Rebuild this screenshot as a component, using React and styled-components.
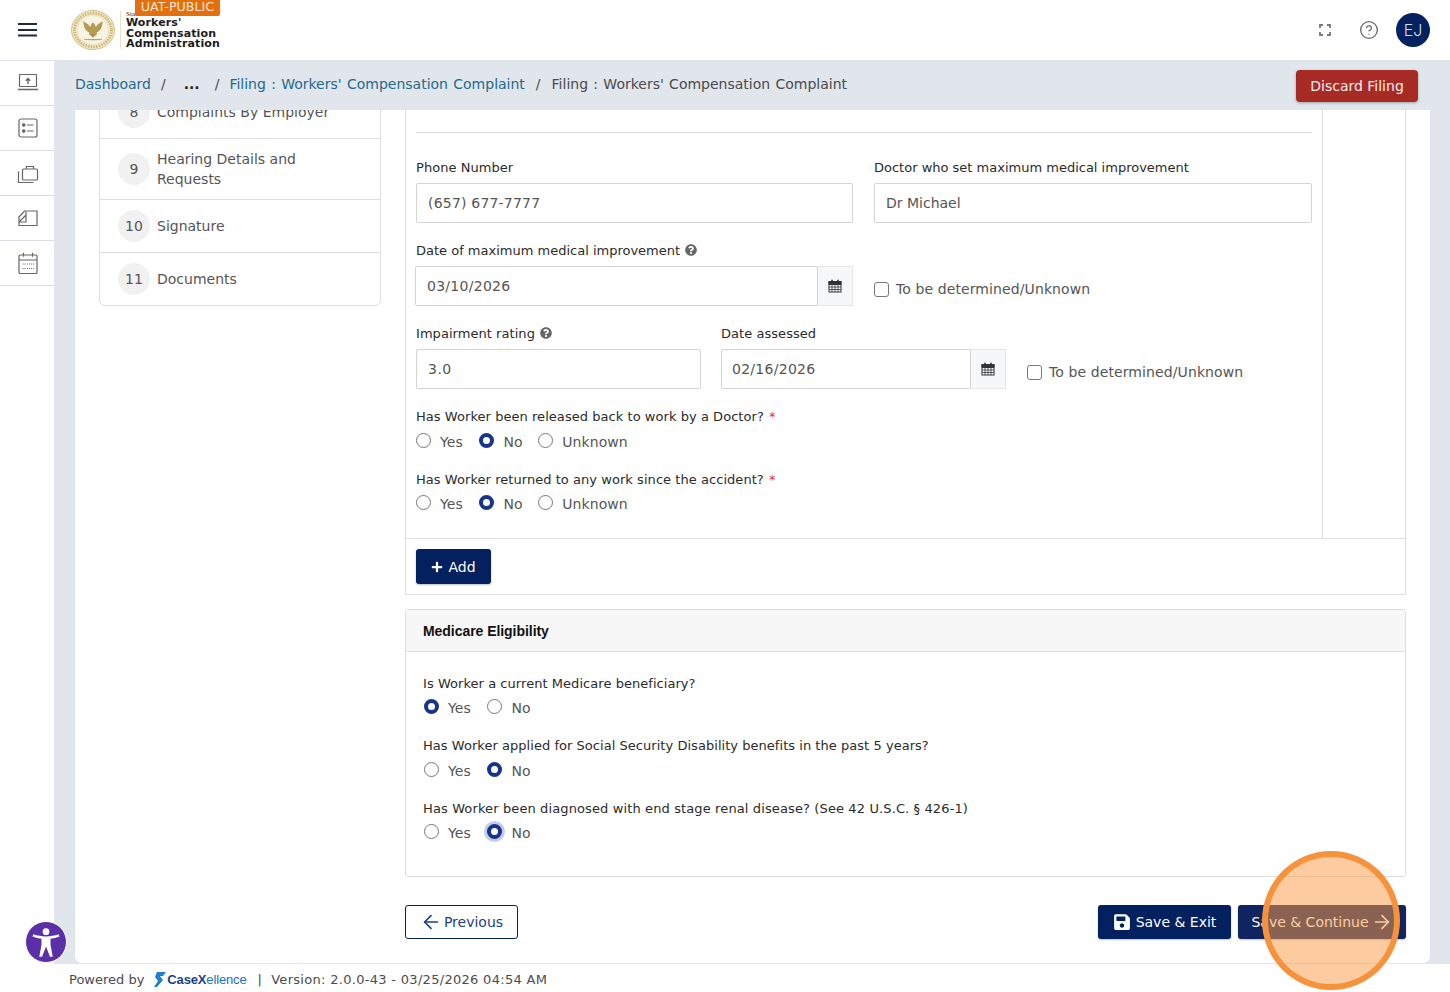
import styled, { createGlobalStyle } from "styled-components";
import { CircleHelp, ArrowLeft, ArrowRight } from "lucide-react";
import { FaPlus, FaSave, FaQuestionCircle } from "react-icons/fa";

const GlobalStyle = createGlobalStyle`
  html, body {
    margin: 0;
    padding: 0;
    background: #fff;
    font-family: "DejaVu Sans", Verdana, sans-serif;
    overflow: hidden;
  }
  * { box-sizing: border-box; }
`;

const Page = styled.div`
  position: relative;
  width: 1450px;
  height: 992px;
  display: flex;
  flex-direction: column;
  overflow: hidden;
`;

const Header = styled.header`
  height: 60px;
  flex: none;
  display: flex;
  align-items: center;
  padding: 0 20px 0 18px;
  background: #fff;
`;

const Burger = styled.div`
  display: flex;
  width: 20px;
  margin-right: 32px;
`;

const Logo = styled.div`
  position: relative;
  display: flex;
  align-items: center;
  height: 60px;
`;

const LogoText = styled.div`
  margin-left: 4px;
  padding-left: 5px;
  padding-top: 7px;
  border-left: 1px solid #e9e2c6;
  height: 38px;
  color: #1c1c1c;
  font-weight: 700;
  font-size: 11px;
  line-height: 10.500px;
  letter-spacing: 0.12px;
  small {
    display: block;
    font-family: "Liberation Serif", serif;
    font-size: 7px;
    font-weight: 400;
    line-height: 5px;
    margin-top: -6px;
    margin-bottom: 1px;
  }
`;

const EnvBadge = styled.div`
  position: absolute;
  top: 0;
  left: 65px;
  width: 85px;
  height: 16px;
  background: #e46f0d;
  color: #fbe4d2;
  border-radius: 0 0 2px 2px;
  font-size: 12.700px;
  line-height: 13px;
  text-align: center;
`;

const HeaderRight = styled.div`
  margin-left: auto;
  display: flex;
  align-items: center;
  color: #6a6a6a;
`;

const HeaderIcon = styled.div`
  display: flex;
  margin-right: ${(p) => p.$gap}px;
`;

const Avatar = styled.div`
  width: 34px;
  height: 34px;
  border-radius: 50%;
  background: #04225f;
  color: #d5deeb;
  font: 300 16px Inter, sans-serif;
  display: flex;
  align-items: center;
  justify-content: center;
`;

const Body = styled.div`
  flex: 1;
  display: flex;
  min-height: 0;
`;

const Sidebar = styled.nav`
  width: 54px;
  flex: none;
  background: #fff;
  border-top: 1px solid #dfe3e8;
`;

const SideItem = styled.div`
  height: 45px;
  display: flex;
  align-items: center;
  justify-content: center;
  padding-left: 2px;
  border-bottom: 1px solid #d9dce0;
  color: #666;
`;

const Main = styled.main`
  flex: 1;
  min-width: 0;
  display: flex;
  flex-direction: column;
  background: #e1e6ed;
`;

const Crumbs = styled.div`
  height: 50px;
  flex: none;
  display: flex;
  align-items: center;
  padding: 0 32px 2px 21px;
  font-size: 14px;
  color: #4a4a4a;
`;

const CrumbLink = styled.a`
  color: #1f6a8c;
`;

const CrumbTitle = styled.span`
  word-spacing: 0.85px;
`;

const CrumbSep = styled.span`
  margin: 0 ${(p) => p.$right}px 0 ${(p) => p.$left}px;
`;

const CrumbMore = styled.b`
  color: #222;
  font-size: 14px;
`;

const DiscardButton = styled.button`
  margin-left: auto;
  margin-top: 4px;
  width: 122px;
  height: 32px;
  border: 0;
  border-radius: 4px;
  background: #a72a25;
  color: #fbeeee;
  font: 14px "DejaVu Sans", sans-serif;
  box-shadow: 0 1px 3px rgba(0, 0, 0, 0.3);
`;

const Card = styled.div`
  flex: 1;
  min-height: 0;
  margin: 0 20px 0 21px;
  padding: 0 24px;
  background: #fff;
  border-radius: 0 0 6px 6px;
  overflow: hidden;
  box-shadow: 0 1px 1px rgba(0, 0, 0, 0.08);
`;

const Columns = styled.div`
  display: flex;
  align-items: flex-start;
  gap: 24px;
  margin-top: -25px;
`;

const Stepper = styled.ul`
  width: 282px;
  flex: none;
  list-style: none;
  margin: 0;
  padding: 0;
  border: 1px solid #dedede;
  border-radius: 6px;
`;

const Step = styled.li`
  height: ${(p) => p.$h}px;
  display: flex;
  align-items: center;
  gap: 7px;
  padding: 0 18px;
  border-bottom: ${(p) => (p.$last ? "0" : "1px solid #dedede")};
  color: #555;
  font-size: 14px;
  line-height: 20px;
`;

const StepNumber = styled.span`
  width: 32px;
  height: 32px;
  flex: none;
  border-radius: 50%;
  background: #f1f1f1;
  display: flex;
  align-items: center;
  justify-content: center;
`;

const FormColumn = styled.div`
  width: 1001px;
  flex: none;
`;

const Panel = styled.section`
  border: 1px solid #dedede;
  border-top: 0;
  margin-bottom: 14px;
`;

const PanelBody = styled.div`
  display: flex;
  height: 453px;
`;

const FormArea = styled.div`
  width: 917px;
  padding: 0 10px;
  border-right: 1px solid #dedede;
`;

const TopRule = styled.div`
  height: 48px;
  border-bottom: 1px solid #dedede;
  margin-bottom: 25px;
`;

const Row = styled.div`
  display: flex;
  align-items: flex-end;
  gap: ${(p) => p.$gap || 21}px;
  margin-bottom: 18px;
`;

const Field = styled.div`
  width: ${(p) => p.$w}px;
  flex: none;
`;

const Label = styled.label`
  display: flex;
  align-items: center;
  gap: 5px;
  height: 18px;
  margin-bottom: 7px;
  color: #2b2b2b;
  font-size: 13px;
  letter-spacing: ${(p) => p.$ls ?? 0.05}px;
  white-space: nowrap;
`;

const Input = styled.input`
  width: 100%;
  height: 40px;
  padding: 0 ${(p) => p.$pad || 11}px;
  border: 1px solid #d4d4d4;
  border-radius: 2px;
  background: #fff;
  color: #555;
  font: 14px "DejaVu Sans", sans-serif;
  letter-spacing: ${(p) => p.$ls || 0}px;
  outline: none;
`;

const DateGroup = styled.div`
  display: flex;
  height: 40px;
  margin-left: ${(p) => p.$shift || 0}px;
`;

const DateAddon = styled.div`
  width: 35px;
  flex: none;
  background: #f6f7f8;
  border: 1px solid #e6e6e6;
  border-left: 0;
  display: flex;
  align-items: center;
  justify-content: center;
`;

const CheckLabel = styled.label`
  display: flex;
  align-items: center;
  gap: 7px;
  height: 40px;
  padding-top: 6px;
  margin-left: ${(p) => p.$ml || 0}px;
  color: #555;
  font-size: 14px;
  letter-spacing: 0.1px;
  white-space: nowrap;
`;

const Check = styled.input`
  appearance: none;
  width: 15px;
  height: 15px;
  margin: 0;
  border: 1px solid #777;
  border-radius: 3px;
  background: #fff;
`;

const RadioQuestion = styled.div`
  margin-bottom: ${(p) => p.$mb}px;
`;

const Required = styled.span`
  color: #d33;
  margin-left: 1px;
`;

const RadioLabel = styled(Label)`
  margin-bottom: ${(p) => p.$below}px;
  gap: 0;
  white-space: pre;
`;

const RadioRow = styled.div`
  display: flex;
  align-items: center;
  height: 26px;
`;

const RadioOption = styled.label`
  display: flex;
  align-items: center;
  gap: 9px;
  margin-right: 16px;
  color: #555;
  font-size: 14px;
  letter-spacing: 0.1px;
  &:first-child { margin-right: 16.500px; }
  &:nth-child(2) { margin-right: 15.500px; }
`;

const Radio = styled.input`
  appearance: none;
  width: 15px;
  height: 15px;
  margin: 0 0 4px;
  border-radius: 50%;
  border: 1px solid #777;
  background: #fff;
  &:checked {
    border: 4px solid #17348c;
  }
  ${(p) => p.$focus && "box-shadow: 0 0 0 3px #c3cde6;"}
`;

const PanelFooter = styled.div`
  border-top: 1px solid #dedede;
  padding: 10px;
  height: 56px;
`;

const SolidButton = styled.button`
  height: ${(p) => p.$h || 34}px;
  width: ${(p) => p.$w}px;
  border: 0;
  border-radius: 3px;
  background: ${(p) => p.$bg || "#03205f"};
  color: #fff;
  font: 14px "DejaVu Sans", sans-serif;
  display: inline-flex;
  align-items: center;
  justify-content: center;
  gap: ${(p) => p.$gap ?? 5}px;
  box-shadow: 0 1px 2px rgba(0, 0, 0, 0.25);
`;

const PanelHeader = styled.div`
  height: 42px;
  display: flex;
  align-items: center;
  padding-left: 17px;
  background: #f7f7f7;
  border-bottom: 1px solid #dedede;
  border-radius: 3px 3px 0 0;
  color: #111;
  font: 700 14px "Liberation Sans", Arial, sans-serif;
  letter-spacing: -0.05px;
`;

const MedicarePanel = styled.section`
  border: 1px solid #dedede;
  border-radius: 3px;
  height: 268px;
`;

const MedicareBody = styled.div`
  padding: 22px 17px 0 18px;
  ${Label} { margin-left: -1px; }
`;

const Actions = styled.div`
  display: flex;
  align-items: center;
  gap: 7px;
  margin-top: 28px;
`;

const OutlineButton = styled.button`
  width: 113px;
  height: 34px;
  margin-right: auto;
  border: 1px solid #03205f;
  border-radius: 3px;
  background: #fff;
  color: #1c3f86;
  font: 14px "DejaVu Sans", sans-serif;
  display: inline-flex;
  align-items: center;
  justify-content: center;
  gap: 2px;
`;

const Footer = styled.footer`
  height: 29px;
  flex: none;
  display: flex;
  align-items: center;
  padding: 2px 0 0 15px;
  background: #fff;
  border-top: 1px solid #e3e6ea;
  color: #4b4b4b;
  font-size: 13px;
  white-space: pre;
`;

const FooterVersion = styled.span`
  margin-left: 1px;
  letter-spacing: 0.3px;
`;

const FooterLogo = styled.span`
  display: inline-flex;
  align-items: center;
  gap: 1px;
  margin: 0 11px 0 10px;
  color: #1d6fc0;
  font: 13px "Liberation Sans", Arial, sans-serif;
  letter-spacing: -0.15px;
  b { font-weight: 700; color: #1b3f8c; }
`;

const AccessButton = styled.div`
  position: absolute;
  left: 25px;
  top: 921px;
  width: 42px;
  height: 42px;
  border-radius: 50%;
  background: #5b2fa8;
  border: 1px solid #fff;
  display: flex;
  align-items: center;
  justify-content: center;
`;

const ClickMarker = styled.div`
  position: absolute;
  left: 1262px;
  top: 851px;
  width: 138px;
  height: 139px;
  border-radius: 50%;
  border: 6px solid #f7923c;
  background: rgba(250, 156, 71, 0.52);
  pointer-events: none;
`;

const BurgerIcon = () => (
  <svg width="20" height="14" viewBox="0 0 20 14" fill="#222b3a">
    <rect x="0" y="0" width="19" height="2" />
    <rect x="0" y="6" width="19" height="2" />
    <rect x="0" y="11.500" width="19" height="2" />
  </svg>
);

const Seal = () => (
  <svg width="46" height="40" viewBox="0 0 46 44" preserveAspectRatio="none">
    <circle cx="23" cy="22" r="21.500" fill="#efe7c9" stroke="#d3c083" strokeWidth="1" />
    <circle cx="23" cy="22" r="18.500" fill="none" stroke="#cdb873" strokeWidth="3" strokeDasharray="1.500 1.200" />
    <circle cx="23" cy="22" r="15" fill="#f8f4e4" />
    <path d="M13 12c1 5 1 9 5 12 1 1 3 2 5 2s4-1 5-2c4-3 4-7 5-12-2 2-6 3-7 7-1-3-2-5-3-5s-2 2-3 5c-1-4-5-5-7-7z" fill="#b59c52" />
    <path d="M19 26l4 4 4-4zM14 32c3 1 15 1 18 0" fill="#a98f49" stroke="#b59c52" />
  </svg>
);

const Fullscreen = () => (
  <svg width="12" height="12" viewBox="0 0 12 12" fill="none" stroke="#777" strokeWidth="1.800">
    <path d="M1 4V1h3M8 1h3v3M11 8v3H8M4 11H1V8" />
  </svg>
);

const SideIcon = ({ children }) => (
  <svg width="22" height="22" viewBox="0 0 22 22" fill="none" stroke="currentColor" strokeWidth="1.200">
    {children}
  </svg>
);

const CalendarIcon = () => (
  <svg width="14" height="14" viewBox="0 0 14 14" fill="none" stroke="#333" strokeWidth="1">
    <rect x="1" y="2.500" width="12" height="10.500" fill="#fff" />
    <path d="M1 2.500h12V5.500H1z" fill="#333" />
    <path d="M1 8h12M1 10.500h12M4 5.500V13M7 5.500V13M10 5.500V13" strokeWidth="0.800" />
    <path d="M4 .8v3M10 .8v3" strokeWidth="1.600" />
  </svg>
);

const AccessFigure = () => (
  <svg width="36" height="36" viewBox="0 0 32 32" fill="#fff">
    <circle cx="16" cy="6.800" r="3" />
    <path d="M4 11l.8-1.800c3.500 1.200 7.300 1.900 11.200 1.900s7.700-.7 11.200-1.900L28 11c-2.600 1-5.300 1.600-8 2v5.500L22 29h-2.500L16 20l-3.500 9H10l2-10.500V13c-2.700-.4-5.400-1-8-2z" />
  </svg>
);

const RadioGroup = ({ name, value, options, focus }) => (
  <RadioRow>
    {options.map((o) => (
      <RadioOption key={o}>
        <Radio type="radio" name={name} defaultChecked={o === value} $focus={focus && o === value} />
        {o}
      </RadioOption>
    ))}
  </RadioRow>
);

export default function App() {
  return (
    <Page>
      <GlobalStyle />
      <Header>
        <Burger><BurgerIcon /></Burger>
        <Logo>
          <Seal />
          <LogoText>
            <small>State</small>
            Workers'<br />Compensation<br />Administration
          </LogoText>
          <EnvBadge>UAT-PUBLIC</EnvBadge>
        </Logo>
        <HeaderRight>
          <HeaderIcon $gap={28}><Fullscreen /></HeaderIcon>
          <HeaderIcon $gap={17}><CircleHelp size={20} strokeWidth={1.6} /></HeaderIcon>
          <Avatar>EJ</Avatar>
        </HeaderRight>
      </Header>

      <Body>
        <Sidebar>
          <SideItem>
            <SideIcon>
              <rect x="2.500" y="2.500" width="17" height="12" rx="0.500" />
              <path d="M1 17.500h20" strokeWidth="1.500" />
              <path d="M11 12V6.500M8.800 8.700 11 6.500l2.200 2.200" strokeWidth="1.400" />
            </SideIcon>
          </SideItem>
          <SideItem>
            <SideIcon>
              <rect x="2" y="2" width="18" height="18" rx="2" />
              <path d="M10 8h6.500M10 14h6.500" />
              <circle cx="6.800" cy="8" r="1.200" fill="currentColor" />
              <circle cx="6.800" cy="14" r="1.200" fill="currentColor" />
            </SideIcon>
          </SideItem>
          <SideItem>
            <SideIcon>
              <rect x="5.500" y="7" width="15" height="11" rx="1" />
              <path d="M9.500 7V4.500h7V7M1.500 9.500V20.500h15" />
            </SideIcon>
          </SideItem>
          <SideItem>
            <SideIcon>
              <path d="M2 10 7.500 4H20V18.500H2z" />
              <path d="M2 15h7V4.500M2 15 9 8" />
            </SideIcon>
          </SideItem>
          <SideItem>
            <SideIcon>
              <rect x="2" y="3" width="18" height="18.500" rx="1" />
              <path d="M2 8h18M6.500 .8v4M15.500 .8v4" />
              <path d="M5.500 12h3M10 12h3M14 12h3M5.500 16.500h3M10 16.500h3M14 16.500h3" strokeDasharray="1 1" />
            </SideIcon>
          </SideItem>
        </Sidebar>

        <Main>
          <Crumbs>
            <CrumbLink>Dashboard</CrumbLink>
            <CrumbSep $left={10} $right={18}>/</CrumbSep>
            <CrumbMore>...</CrumbMore>
            <CrumbSep $left={15} $right={10}>/</CrumbSep>
            <CrumbLink><CrumbTitle>Filing : Workers' Compensation Complaint</CrumbTitle></CrumbLink>
            <CrumbSep $left={11} $right={11}>/</CrumbSep>
            <CrumbTitle>Filing : Workers' Compensation Complaint</CrumbTitle>
            <DiscardButton>Discard Filing</DiscardButton>
          </Crumbs>

          <Card>
            <Columns>
              <Stepper>
                <Step $h={53}><StepNumber>8</StepNumber>Complaints By Employer</Step>
                <Step $h={61}><StepNumber>9</StepNumber>Hearing Details and<br />Requests</Step>
                <Step $h={53}><StepNumber>10</StepNumber>Signature</Step>
                <Step $h={52} $last><StepNumber>11</StepNumber>Documents</Step>
              </Stepper>

              <FormColumn>
                <Panel>
                  <PanelBody>
                    <FormArea>
                      <TopRule />
                      <Row>
                        <Field $w={437}>
                          <Label>Phone Number</Label>
                          <Input defaultValue="(657) 677-7777" $ls={0.2} />
                        </Field>
                        <Field $w={438}>
                          <Label $ls={0}>Doctor who set maximum medical improvement</Label>
                          <Input defaultValue="Dr Michael" />
                        </Field>
                      </Row>
                      <Row>
                        <Field $w={437}>
                          <Label $ls={0}>Date of maximum medical improvement <FaQuestionCircle size={12} color="#666" /></Label>
                          <DateGroup $shift={-1}>
                            <Input defaultValue="03/10/2026" $ls={0.28} />
                            <DateAddon><CalendarIcon /></DateAddon>
                          </DateGroup>
                        </Field>
                        <CheckLabel><Check type="checkbox" />To be determined/Unknown</CheckLabel>
                      </Row>
                      <Row $gap={20}>
                        <Field $w={285}>
                          <Label>Impairment rating <FaQuestionCircle size={12} color="#666" /></Label>
                          <Input defaultValue="3.0" $ls={0.5} />
                        </Field>
                        <Field $w={285}>
                          <Label>Date assessed</Label>
                          <DateGroup>
                            <Input defaultValue="02/16/2026" $pad={10} $ls={0.28} />
                            <DateAddon><CalendarIcon /></DateAddon>
                          </DateGroup>
                        </Field>
                        <CheckLabel $ml={1}><Check type="checkbox" />To be determined/Unknown</CheckLabel>
                      </Row>
                      <RadioQuestion $mb={15}>
                        <RadioLabel $below={4}>Has Worker been released back to work by a Doctor? <Required>*</Required></RadioLabel>
                        <RadioGroup name="released" value="No" options={["Yes", "No", "Unknown"]} />
                      </RadioQuestion>
                      <RadioQuestion $mb={0}>
                        <RadioLabel $below={3}>Has Worker returned to any work since the accident? <Required>*</Required></RadioLabel>
                        <RadioGroup name="returned" value="No" options={["Yes", "No", "Unknown"]} />
                      </RadioQuestion>
                    </FormArea>
                  </PanelBody>
                  <PanelFooter>
                    <SolidButton $w={75} $h={35}><FaPlus size={12} />Add</SolidButton>
                  </PanelFooter>
                </Panel>

                <MedicarePanel>
                  <PanelHeader>Medicare Eligibility</PanelHeader>
                  <MedicareBody>
                    <RadioQuestion $mb={15}>
                      <RadioLabel $below={3}>Is Worker a current Medicare beneficiary?</RadioLabel>
                      <RadioGroup name="beneficiary" value="Yes" options={["Yes", "No"]} />
                    </RadioQuestion>
                    <RadioQuestion $mb={15}>
                      <RadioLabel $below={4} $ls={0.04}>Has Worker applied for Social Security Disability benefits in the past 5 years?</RadioLabel>
                      <RadioGroup name="disability" value="No" options={["Yes", "No"]} />
                    </RadioQuestion>
                    <RadioQuestion $mb={0}>
                      <RadioLabel $below={3} $ls={0.12}>Has Worker been diagnosed with end stage renal disease? (See 42 U.S.C. § 426-1)</RadioLabel>
                      <RadioGroup name="renal" value="No" options={["Yes", "No"]} focus />
                    </RadioQuestion>
                  </MedicareBody>
                </MedicarePanel>

                <Actions>
                  <OutlineButton><ArrowLeft size={22} strokeWidth={1.800} />Previous</OutlineButton>
                  <SolidButton $w={133}><FaSave size={18} />Save &amp; Exit</SolidButton>
                  <SolidButton $w={168} $bg="#10255f" $gap={2}>Save &amp; Continue<ArrowRight size={22} strokeWidth={1.800} /></SolidButton>
                </Actions>
              </FormColumn>
            </Columns>
          </Card>

          <Footer>
            Powered by
            <FooterLogo>
              <svg width="12" height="15" viewBox="0 0 12 15" fill="#1d7fd1"><path d="M3 0h9L9 4H6l3 4-6 7H0l4-6-3-4z" /></svg>
              <span><b>CaseX</b>ellence</span>
            </FooterLogo>
            |  <FooterVersion>Version: 2.0.0-43 - 03/25/2026 04:54 AM</FooterVersion>
          </Footer>
        </Main>
      </Body>

      <AccessButton><AccessFigure /></AccessButton>
      <ClickMarker />
    </Page>
  );
}
